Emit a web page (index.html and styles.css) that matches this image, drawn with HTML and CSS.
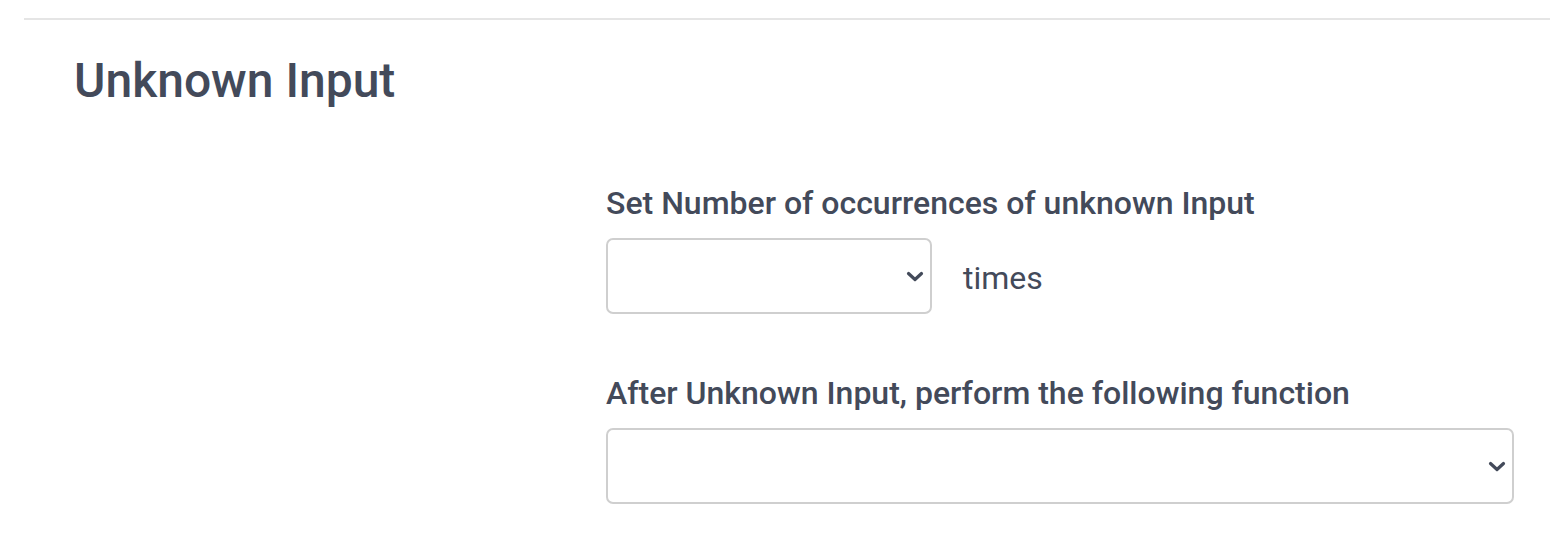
FILE: index.html
```html
<!DOCTYPE html>
<html>
<head>
<meta charset="utf-8">
<link rel="stylesheet" href="styles.css">
</head>
<body>
<section class="panel">
  <h2 class="panel-title">Unknown Input</h2>
  <div class="panel-body">
    <div class="spacer"></div>
    <div class="fields">
      <div class="field">
        <label class="field-label">Set Number of occurrences of unknown Input</label>
        <div class="inline-row">
          <div class="select small"><span class="chev"><svg width="18" height="11" viewBox="0 0 18 11"><path d="M2.5 2.5 L9 8.5 L15.5 2.5" fill="none" stroke="#434a5a" stroke-width="3.2" stroke-linecap="round" stroke-linejoin="round"/></svg></span></div>
          <span class="suffix">times</span>
        </div>
      </div>
      <div class="field">
        <label class="field-label">After Unknown Input, perform the following function</label>
        <div class="select wide"><span class="chev"><svg width="18" height="11" viewBox="0 0 18 11"><path d="M2.5 2.5 L9 8.5 L15.5 2.5" fill="none" stroke="#434a5a" stroke-width="3.2" stroke-linecap="round" stroke-linejoin="round"/></svg></span></div>
      </div>
    </div>
  </div>
</section>
</body>
</html>
```
FILE: styles.css
```css
html, body {
  margin: 0;
  padding: 0;
  background: #fff;
}
body {
  font-family: Roboto, "Liberation Sans", sans-serif;
  color: #434a5a;
}
.panel {
  margin: 18px 0 0 24px;
  border-top: 2px solid #e5e5e5;
}
.panel-title {
  margin: 0;
  padding: 31px 0 0 50px;
  font-size: 48px;
  font-weight: 500;
  line-height: 60px;
}
.panel-body {
  display: flex;
  padding-top: 72px;
}
.spacer {
  width: 582px;
  flex: none;
}
.fields {
  width: 908px;
  display: flex;
  flex-direction: column;
  gap: 59px;
}
.field {
  display: flex;
  flex-direction: column;
}
.field-label {
  font-size: 32px;
  font-weight: 500;
  line-height: 40px;
  margin-bottom: 15px;
}
.inline-row {
  display: flex;
  align-items: center;
  gap: 31px;
}
.select {
  box-sizing: border-box;
  height: 76px;
  border: 2px solid #cfcfcf;
  border-radius: 7px;
  display: flex;
  align-items: center;
  justify-content: flex-end;
  padding-right: 6px;
  background: #fff;
}
.select.small {
  width: 326px;
}
.select.wide {
  width: 908px;
}
.chev {
  display: flex;
}
.suffix {
  font-size: 32px;
  line-height: 40px;
  padding-top: 4px;
}
```
